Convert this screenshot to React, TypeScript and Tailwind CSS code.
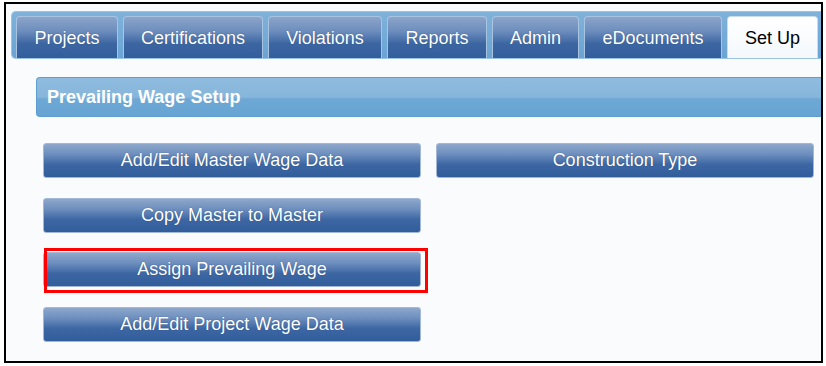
const tabs = [
  { label: "Projects", w: "w-[102px]" },
  { label: "Certifications", w: "w-[140px]" },
  { label: "Violations", w: "w-[114px]" },
  { label: "Reports", w: "w-[100px]" },
  { label: "Admin", w: "w-[87px]" },
  { label: "eDocuments", w: "w-[138px]" },
]

const btn =
  "h-[35px] w-[378px] rounded-[3px] border border-[#a3b8d6] bg-[linear-gradient(to_bottom,#8ea7cb_0%,#6e8fbf_30%,#3d67a3_62%,#315d9c_100%)] text-white text-[18px] flex items-center justify-center [text-shadow:0_0_1px_rgba(20,40,80,0.6)]"

export default function App() {
  return (
    <div className="w-[826px] h-[366px] bg-white pt-[2px] pl-[4px] font-['Liberation_Sans',Arial,sans-serif]">
      <div className="w-[819px] h-[361px] border-2 border-black bg-[#f9fbfc] flex flex-col">
        {/* tab strip */}
        <div className="mt-[7px] ml-[5px] h-[48px] rounded-l-[5px] border border-r-0 border-[#9cc3e3] bg-[linear-gradient(to_bottom,#7fb2da,#6aa4d3)] pl-[4px] pt-[5px] flex items-end gap-[5px]">
          {tabs.map((t) => (
            <div
              key={t.label}
              className={`${t.w} h-[42px] pt-[2px] rounded-t-[4px] border border-b-0 border-[#a9c4e0] bg-[linear-gradient(to_bottom,#8ca5ca_0%,#6c8dbd_35%,#3c66a2_65%,#325e9c_100%)] text-white text-[18px] flex items-center justify-center [text-shadow:0_0_1px_rgba(20,40,80,0.5)]`}
            >
              {t.label}
            </div>
          ))}
          <div className="w-[91px] h-[42px] pt-[2px] rounded-t-[4px] border border-b-0 border-[#c9dcec] bg-[linear-gradient(to_bottom,#ffffff,#f4f8fb)] text-black text-[18px] flex items-center justify-center">
            Set Up
          </div>
        </div>

        {/* section header */}
        <div className="mt-[18px] ml-[30px] h-[40px] rounded-l-[4px] border border-r-0 border-[#5e9dd0] bg-[linear-gradient(to_bottom,#8fbcdf_0%,#86b6db_50%,#6da8d5_56%,#68a4d3_100%)] flex items-center pl-[10px]">
          <span className="text-white font-bold text-[18px]">Prevailing Wage Setup</span>
        </div>

        {/* buttons */}
        <div className="mt-[26px] ml-[37px] grid grid-cols-[378px_378px] gap-x-[15px] gap-y-[19.5px]">
          <div className={btn}>Add/Edit Master Wage Data</div>
          <div className={btn}>Construction Type</div>
          <div className={btn}>Copy Master to Master</div>
          <div />
          <div className="relative">
            <div className={btn}>Assign Prevailing Wage</div>
            <div className="absolute left-[1px] top-[-4px] w-[384px] h-[45px] border-[3px] border-[#ff0000]" />
          </div>
          <div />
          <div className={btn}>Add/Edit Project Wage Data</div>
        </div>
      </div>
    </div>
  )
}
